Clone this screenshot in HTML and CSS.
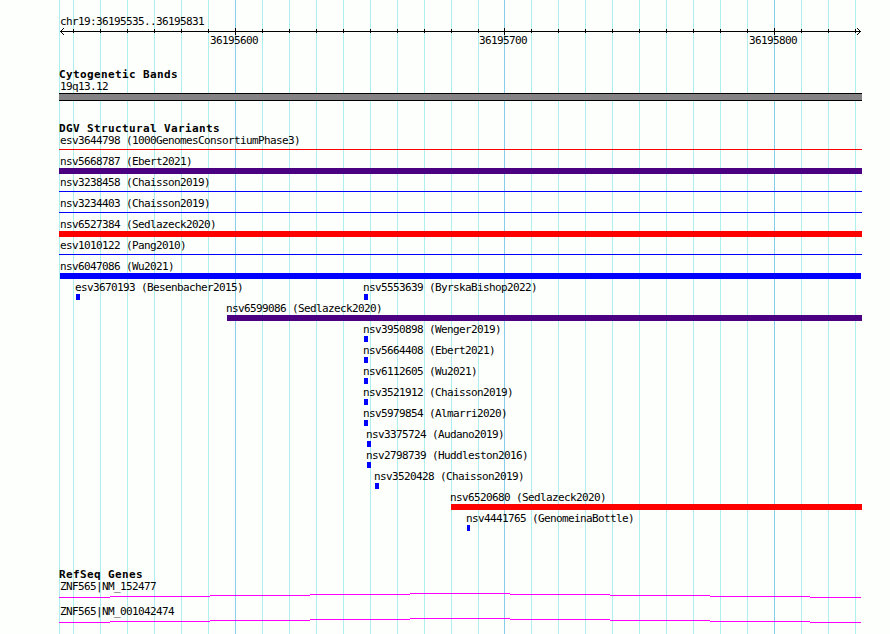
FILE: index.html
```
<!DOCTYPE html>
<html lang="en">
<head>
    <meta charset="UTF-8">
    <title>chr19:36195535..36195831</title>
    <link rel="stylesheet" href="styles.css">
</head>
<body>
    <div class="browser">
        <!-- Vertical grid, one line every 10 bp -->
        <svg class="grid-lines" width="890" height="634" shape-rendering="crispEdges">
            <path class="minor" d="M59.5 0v634M73.5 0v634M100.5 0v634M127.5 0v634M154.5 0v634M181.5 0v634M208.5 0v634M262.5 0v634M289.5 0v634M316.5 0v634M343.5 0v634M370.5 0v634M397.5 0v634M424.5 0v634M451.5 0v634M478.5 0v634M531.5 0v634M558.5 0v634M585.5 0v634M612.5 0v634M639.5 0v634M666.5 0v634M693.5 0v634M720.5 0v634M747.5 0v634M801.5 0v634M828.5 0v634M855.5 0v634"/>
            <path class="major" d="M235.5 0v634M504.5 0v634M774.5 0v634"/>
        </svg>

        <section class="ruler">
            <div class="label">chr19:36195535..36195831</div>
            <svg class="axis" width="803" height="7" shape-rendering="crispEdges">
                <path d="M1 3.5h801M14.5 1v4M41.5 1v4M68.5 1v4M95.5 1v4M122.5 1v4M149.5 1v4M203.5 1v4M230.5 1v4M257.5 1v4M284.5 1v4M311.5 1v4M338.5 1v4M365.5 1v4M392.5 1v4M419.5 1v4M472.5 1v4M499.5 1v4M526.5 1v4M553.5 1v4M580.5 1v4M607.5 1v4M634.5 1v4M661.5 1v4M688.5 1v4M742.5 1v4M769.5 1v4M796.5 1v4"/>
                <path d="M176.5 0v7M445.5 0v7M715.5 0v7"/>
                <path d="M2 2.5h1M3 1.5h1M4 0.5h1M2 4.5h1M3 5.5h1M4 6.5h1M800 2.5h1M799 1.5h1M798 0.5h1M800 4.5h1M799 5.5h1M798 6.5h1"/>
            </svg>
            <div class="row positions">
                <span class="position" style="margin-left: 151px">36195600</span>
                <span class="position" style="margin-left: 420px">36195700</span>
                <span class="position" style="margin-left: 690px">36195800</span>
            </div>
        </section>

        <section class="bands">
            <h2>Cytogenetic Bands</h2>
            <div class="label">19q13.12</div>
            <div class="band"></div>
        </section>

        <section class="variants">
            <h2>DGV Structural Variants</h2>
            <div class="row"><div class="feature full line red"><span>esv3644798 (1000GenomesConsortiumPhase3)</span><i></i></div></div>
            <div class="row"><div class="feature full indigo"><span>nsv5668787 (Ebert2021)</span><i></i></div></div>
            <div class="row"><div class="feature full line"><span>nsv3238458 (Chaisson2019)</span><i></i></div></div>
            <div class="row"><div class="feature full line"><span>nsv3234403 (Chaisson2019)</span><i></i></div></div>
            <div class="row"><div class="feature full red"><span>nsv6527384 (Sedlazeck2020)</span><i></i></div></div>
            <div class="row"><div class="feature full line"><span>esv1010122 (Pang2010)</span><i></i></div></div>
            <div class="row"><div class="feature full inset"><span>nsv6047086 (Wu2021)</span><i></i></div></div>
            <div class="row">
                <div class="feature" style="margin-left: 17px"><span>esv3670193 (Besenbacher2015)</span><i style="width: 4px"></i></div>
                <div class="feature" style="margin-left: 305px"><span>nsv5553639 (ByrskaBishop2022)</span><i style="width: 4px"></i></div>
            </div>
            <div class="row"><div class="feature indigo" style="margin-left: 168px"><span>nsv6599086 (Sedlazeck2020)</span><i></i></div></div>
            <div class="row"><div class="feature" style="margin-left: 305px"><span>nsv3950898 (Wenger2019)</span><i style="width: 4px"></i></div></div>
            <div class="row"><div class="feature" style="margin-left: 305px"><span>nsv5664408 (Ebert2021)</span><i style="width: 4px"></i></div></div>
            <div class="row"><div class="feature" style="margin-left: 305px"><span>nsv6112605 (Wu2021)</span><i style="width: 4px"></i></div></div>
            <div class="row"><div class="feature" style="margin-left: 305px"><span>nsv3521912 (Chaisson2019)</span><i style="width: 4px"></i></div></div>
            <div class="row"><div class="feature" style="margin-left: 305px"><span>nsv5979854 (Almarri2020)</span><i style="width: 4px"></i></div></div>
            <div class="row"><div class="feature" style="margin-left: 308px"><span>nsv3375724 (Audano2019)</span><i style="width: 4px"></i></div></div>
            <div class="row"><div class="feature" style="margin-left: 308px"><span>nsv2798739 (Huddleston2016)</span><i style="width: 4px"></i></div></div>
            <div class="row"><div class="feature" style="margin-left: 316px"><span>nsv3520428 (Chaisson2019)</span><i style="width: 4px"></i></div></div>
            <div class="row"><div class="feature red" style="margin-left: 392px"><span>nsv6520680 (Sedlazeck2020)</span><i></i></div></div>
            <div class="row"><div class="feature" style="margin-left: 408px"><span>nsv4441765 (GenomeinaBottle)</span><i style="width: 3px"></i></div></div>
        </section>

        <section class="genes">
            <h2>RefSeq Genes</h2>
            <div class="gene">
                <div class="label">ZNF565|NM_152477</div>
                <svg class="intron" width="803" height="5" shape-rendering="crispEdges">
                    <path d="M0 4.5H51M51 3.5H151M151 2.5H251M251 1.5H351M351 0.5H451M451 1.5H551M551 2.5H651M651 3.5H751M751 4.5H802"/>
                </svg>
            </div>
            <div class="gene">
                <div class="label">ZNF565|NM_001042474</div>
                <svg class="intron" width="803" height="5" shape-rendering="crispEdges">
                    <path d="M0 4.5H51M51 3.5H151M151 2.5H251M251 1.5H351M351 0.5H451M451 1.5H551M551 2.5H651M651 3.5H751M751 4.5H802"/>
                </svg>
            </div>
        </section>
    </div>
</body>
</html>
```
FILE: styles.css
```
* {
    margin: 0;
    padding: 0;
    box-sizing: border-box;
}

body {
    background: #fdfffc;
    color: #000;
    font-family: "DejaVu Sans Mono", monospace;
    font-size: 11px;
    line-height: 13px;
    letter-spacing: -0.622px;
    white-space: nowrap;
}

svg {
    display: block;
    fill: none;
}

.browser {
    position: relative;
    height: 634px;
    padding: 15px 28px 0 59px;
    overflow: hidden;
}

.grid-lines {
    position: absolute;
    top: 0;
    left: 0;
    z-index: -1;
}

.minor {
    stroke: #afeeee;
}

.major {
    stroke: #87ceeb;
}

h2 {
    height: 12px;
    font-size: 11px;
    font-weight: bold;
    letter-spacing: 0.378px;
}

.label {
    height: 13px;
    padding-left: 1px;
}

.row {
    display: grid;
}

.row > * {
    grid-area: 1 / 1;
}

/* Ruler */
.axis {
    stroke: #000;
}

.positions {
    height: 13px;
    margin-top: -1px;
}

/* Cytogenetic bands */
.bands {
    margin-top: 21px;
}

.band {
    height: 8px;
    background: #848284;
    border-top: 1px solid #000;
    border-bottom: 1px solid #000;
}

/* Structural variants */
.variants {
    margin-top: 21px;
}

.variants .row {
    height: 21px;
}

.feature span {
    display: block;
    height: 13px;
    margin-left: -1px;
}

.feature i {
    display: block;
    height: 6px;
    background: #0000ff;
}

.feature.full span {
    margin-left: 1px;
}

.feature.inset i {
    margin: 0 1px;
}

.feature.indigo i {
    background: #4b0082;
}

.feature.red i {
    background: #ff0000;
}

.feature.line i {
    height: 1px;
    margin-top: 2px;
}

/* Genes */
.genes {
    margin-top: 35px;
}

.gene {
    height: 25px;
}

.intron {
    stroke: #ff00ff;
}
```
